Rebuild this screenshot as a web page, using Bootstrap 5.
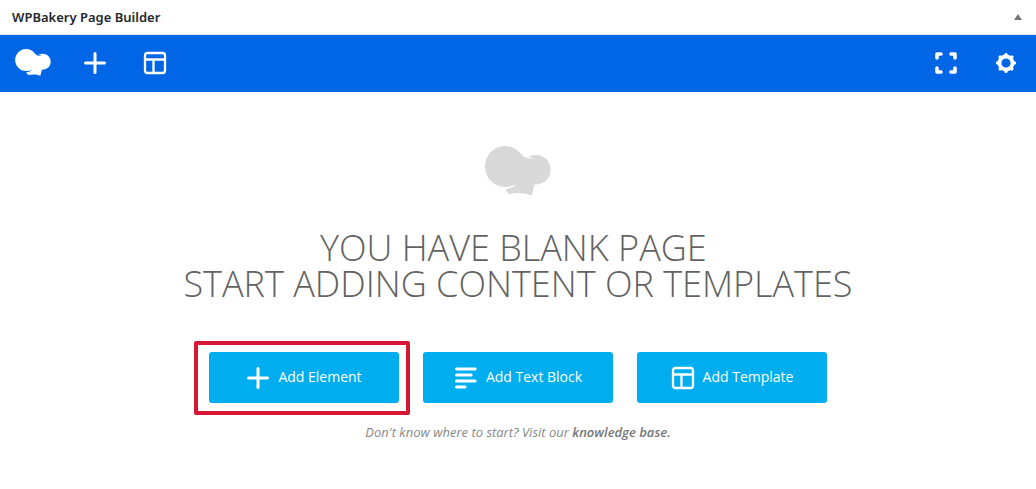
<!DOCTYPE html>
<html lang="en">
<head>
<meta charset="utf-8">
<meta name="viewport" content="width=device-width, initial-scale=1">
<title>WPBakery Page Builder</title>
<link href="https://cdn.jsdelivr.net/npm/bootstrap@5.3.0/dist/css/bootstrap.min.css" rel="stylesheet">
<style>
body { font-family: "Open Sans", "Noto Sans", sans-serif; font-size: 14px; }
.panel-head { height: 35px; padding: 0 12px; border-bottom: 1px solid #e9eaec; }
.panel-title { font: 600 13px/20px "Noto Sans", sans-serif; color: #23282d; }
.panel-toggle { width: 12px; height: 20px; color: #72777c; line-height: 0; }
.builder-bar { height: 57px; padding: 0 18px 2px 15px; background: #0066e5; color: #fff; }
.bar-link { width: 24px; height: 24px; line-height: 0; }
.brand-link { width: 36px; line-height: 0; margin-right: 32px; }
.welcome { padding: 54px 16px 47px; }
.welcome-logo { color: #d9d9d9; }
.welcome-title { font-size: 36px; line-height: 36px; font-weight: 300; color: #626262; margin: 34px 0 50px; }
.action-btn { width: 190px; height: 51px; border-radius: 3px; background: #00aeef; color: #fff; font-size: 14px; line-height: 20px; }
.action-btn:hover { background: #009fda; color: #fff; }
.action-btn svg { flex: none; }
.action-label { padding-bottom: 2px; }
.action-row { gap: 24px; }
.highlight { position: absolute; inset: -11px -11px -12px -15px; border: 4px solid #d51635; border-radius: 2px; pointer-events: none; }
.hint { font-size: 13px; line-height: 20px; color: #888; margin: 19px 0 0; }
.hint a { color: #777; font-weight: 600; }
</style>
</head>
<body class="bg-white">
<svg class="d-none" aria-hidden="true">
  <symbol id="chef" viewBox="0 0 66 50"><path fill="currentColor" d="M20.3 0C27.500 0 32.500 3.200 36.500 8.200C39 11.300 42 12.900 50.500 12.300C47.500 12.100 44.800 11.600 43 10.600C45.500 9.500 48 9 51 9C59.300 9 65.700 15.600 65.700 23.700C65.700 32 59.500 38.300 49.800 38.500C48.300 41.500 47.700 46 46.700 49.700C40 46.800 32 46.400 24.300 48.200C22.300 46.800 21 45.200 20.700 43.200C25.500 42.700 29 40.800 31 37.800C27.800 40 24.300 40.900 20.300 40.900C9 40.900 0 31.800 0 20.500S9 0 20.300 0Z"/></symbol>
  <symbol id="plus" viewBox="0 0 24 24"><path d="M12 2.500V21.500M2.500 12H21.500" stroke="currentColor" stroke-width="3" stroke-linecap="round"/></symbol>
  <symbol id="template" viewBox="0 0 24 24"><path d="M4.500 2H19.500Q22 2 22 4.500V19.500Q22 22 19.500 22H4.500Q2 22 2 19.500V4.500Q2 2 4.500 2ZM2 8.500H22M10.500 8.500V22" fill="none" stroke="currentColor" stroke-width="2.300"/></symbol>
  <symbol id="textblock" viewBox="0 0 24 24"><path d="M2.500 3H21M2.500 9H17M2.500 15H21M2.500 21H11" stroke="currentColor" stroke-width="3.200" stroke-linecap="round"/></symbol>
  <symbol id="expand" viewBox="0 0 24 24"><path d="M3 7V3H7M17 3H21V7M21 17V21H17M7 21H3V17" fill="none" stroke="currentColor" stroke-width="3.600" stroke-linecap="round" stroke-linejoin="round"/></symbol>
  <symbol id="gear" viewBox="0 0 24 24"><circle cx="12" cy="12" r="6.500" fill="none" stroke="currentColor" stroke-width="3.800"/><path d="M12 3.600V4M12 20V20.400M3.600 12H4M20 12H20.400M6.100 6.100L6.400 6.400M17.600 17.600L17.900 17.900M6.100 17.900L6.400 17.600M17.600 6.400L17.900 6.100" stroke="currentColor" stroke-width="3.400" stroke-linecap="round"/></symbol>
</svg>

<header class="panel-head d-flex align-items-center justify-content-between">
  <h1 class="panel-title mb-0">WPBakery Page Builder</h1>
  <button type="button" class="panel-toggle btn p-0 border-0" aria-label="Toggle panel"><svg width="10" height="8" viewBox="0 0 10 8" aria-hidden="true"><path d="M5 1L9 7H1Z" fill="currentColor"/></svg></button>
</header>

<nav class="builder-bar d-flex align-items-center justify-content-between" aria-label="Page builder">
  <div class="d-flex align-items-center">
    <a href="#" class="brand-link text-reset" aria-label="WPBakery"><svg width="36" height="27" aria-hidden="true"><use href="#chef"/></svg></a>
    <a href="#" class="bar-link text-reset me-4" aria-label="Add element"><svg width="24" height="24" aria-hidden="true"><use href="#plus"/></svg></a>
    <a href="#" class="bar-link text-reset ms-2 me-1 px-1" aria-label="Templates"><svg width="24" height="24" aria-hidden="true"><use href="#template"/></svg></a>
  </div>
  <div class="d-flex align-items-center gap-4">
    <a href="#" class="bar-link text-reset me-2 pe-1" aria-label="Full screen"><svg width="24" height="24" aria-hidden="true"><use href="#expand"/></svg></a>
    <a href="#" class="bar-link text-reset ms-1" aria-label="Settings"><svg width="24" height="24" aria-hidden="true"><use href="#gear"/></svg></a>
  </div>
</nav>

<main class="welcome d-flex flex-column align-items-center text-center">
  <svg class="welcome-logo" width="66" height="50" aria-hidden="true"><use href="#chef"/></svg>
  <h2 class="welcome-title">YOU HAVE BLANK PAGE&nbsp;<br>START ADDING CONTENT OR TEMPLATES</h2>
  <div class="action-row d-flex flex-wrap justify-content-center">
    <div class="position-relative">
      <button type="button" class="action-btn btn border-0 p-0 d-flex align-items-center justify-content-center gap-2"><svg width="24" height="24" aria-hidden="true"><use href="#plus"/></svg><span class="action-label">Add Element</span></button>
      <span class="highlight"></span>
    </div>
    <button type="button" class="action-btn btn border-0 p-0 d-flex align-items-center justify-content-center gap-2"><svg width="24" height="24" aria-hidden="true"><use href="#textblock"/></svg><span class="action-label">Add Text Block</span></button>
    <button type="button" class="action-btn btn border-0 p-0 d-flex align-items-center justify-content-center gap-2"><svg width="24" height="24" aria-hidden="true"><use href="#template"/></svg><span class="action-label">Add Template</span></button>
  </div>
  <p class="hint fst-italic">Don't know where to start? Visit our <a href="#" class="text-decoration-none">knowledge base.</a></p>
</main>
<script src="https://cdn.jsdelivr.net/npm/bootstrap@5.3.0/dist/js/bootstrap.bundle.min.js"></script>
</body>
</html>
